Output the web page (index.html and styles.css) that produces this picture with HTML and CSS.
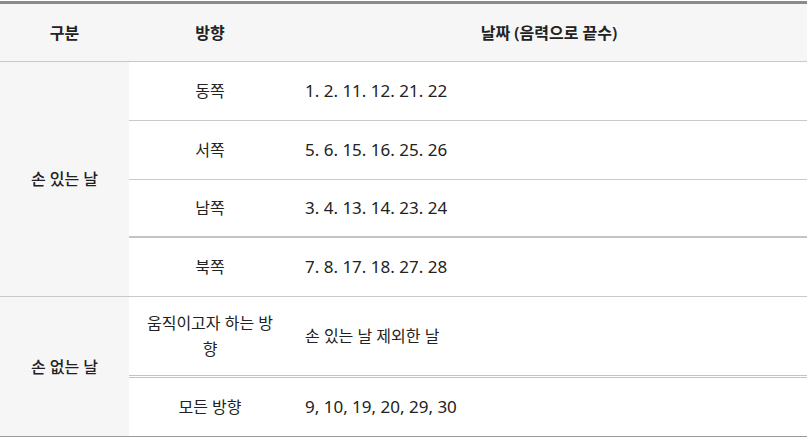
FILE: index.html
```html
<!DOCTYPE html>
<html lang="ko">
<head>
<meta charset="utf-8">
<title>손 있는 날</title>
<link rel="stylesheet" href="styles.css">
</head>
<body>
<table class="days">
  <colgroup>
    <col class="c-kind">
    <col class="c-dir">
    <col class="c-date">
  </colgroup>
  <thead>
    <tr>
      <th>구분</th>
      <th>방향</th>
      <th>날짜 (음력으로 끝수)</th>
    </tr>
  </thead>
  <tbody>
    <tr class="r-line">
      <td class="kind kind-top" rowspan="4">손 있는 날</td>
      <td class="dir">동쪽</td>
      <td class="date num">1. 2. 11. 12. 21. 22</td>
    </tr>
    <tr class="r-line">
      <td class="dir">서쪽</td>
      <td class="date num">5. 6. 15. 16. 25. 26</td>
    </tr>
    <tr class="r-thick">
      <td class="dir">남쪽</td>
      <td class="date num">3. 4. 13. 14. 23. 24</td>
    </tr>
    <tr class="r-line">
      <td class="dir">북쪽</td>
      <td class="date num">7. 8. 17. 18. 27. 28</td>
    </tr>
    <tr class="r-double">
      <td class="kind kind-bottom" rowspan="2">손 없는 날</td>
      <td class="dir dir-wrap">움직이고자 하는 방향</td>
      <td class="date">손 있는 날 제외한 날</td>
    </tr>
    <tr class="r-last">
      <td class="dir">모든 방향</td>
      <td class="date num">9, 10, 19, 20, 29, 30</td>
    </tr>
  </tbody>
</table>
</body>
</html>
```

FILE: styles.css
```css
html, body {
  margin: 0;
  padding: 0;
  background: #fff;
}

body {
  font-family: "Noto Sans", "Noto Sans CJK KR", sans-serif;
  font-size: 16px;
  color: #222;
}

.days {
  margin-top: 1px;
  width: 807px;
  table-layout: fixed;
  border-collapse: separate;
  border-spacing: 0;
  border-top: 3px solid #8a8a8a;
}

.c-kind { width: 129px; }
.c-dir { width: 162px; }

.days th {
  background: #f6f6f6;
  height: 57px;
  padding: 0 12px;
  font-weight: 600;
  line-height: 26px;
  text-align: center;
  vertical-align: middle;
  border-bottom: 1px solid #c9c9c9;
}

.days td {
  padding: 16px 12px;
  line-height: 26px;
  vertical-align: middle;
}

.kind {
  background: #f6f6f6;
  text-align: center;
  font-weight: 500;
}

.kind-top {
  border-bottom: 1px solid #c9c9c9;
}

.kind-bottom {
  border-bottom: 1px solid #9a9a9a;
}

.dir {
  text-align: center;
}

.days td.dir-wrap {
  padding-top: 13px;
  padding-bottom: 13px;
}

.date {
  text-align: left;
}

.days td.date {
  padding-left: 14px;
}

.num {
  font-size: 17px;
}

.r-line .dir,
.r-line .date {
  border-bottom: 1px solid #c9c9c9;
}

.r-thick .dir,
.r-thick .date {
  border-bottom: 2px solid #c4c4c4;
}

.r-thick td {
  padding-top: 15px;
  padding-bottom: 15px;
}

.r-double .dir,
.r-double .date {
  border-bottom: 3px double #c4c4c4;
}

.r-last .dir,
.r-last .date {
  border-bottom: 1px solid #9a9a9a;
}
```
